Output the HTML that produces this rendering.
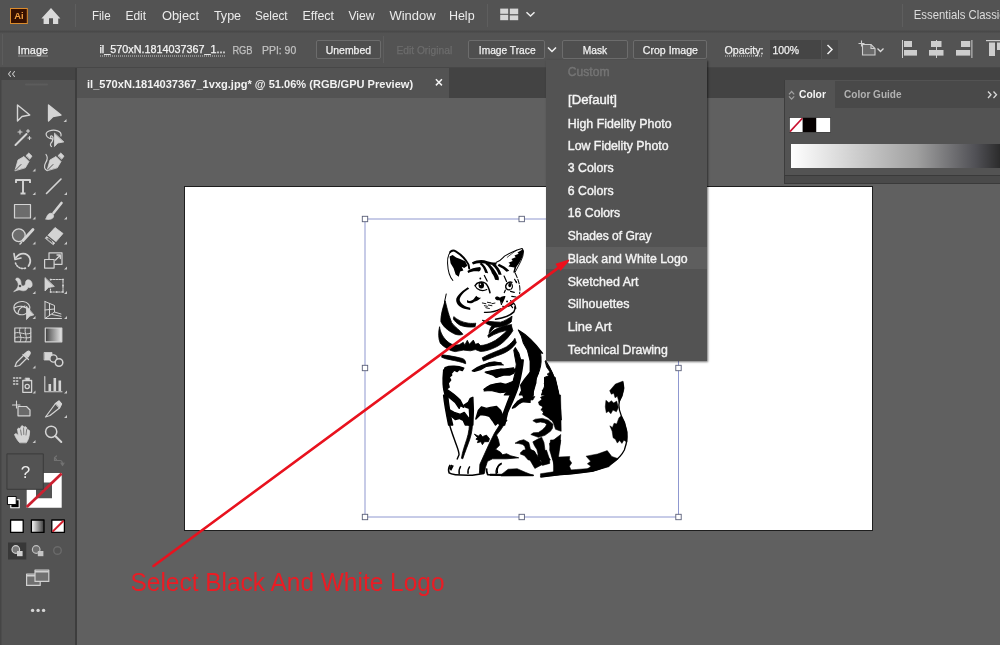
<!DOCTYPE html>
<html><head><meta charset="utf-8">
<style>
*{box-sizing:border-box;margin:0;padding:0}
html,body{width:1000px;height:645px;overflow:hidden;background:#606060;font-family:"Liberation Sans",sans-serif;}
.abs{position:absolute}
svg{will-change:transform}
#cat{filter:blur(0.3px)}
#menubar{left:0;top:0;width:1000px;height:31px;background:#535353;}
#ctrl{left:0;top:31px;width:1000px;height:36px;background:#535353;}
#sep1{left:0;top:29.5px;width:1000px;height:3px;background:linear-gradient(#515151,#494949,#505050)}
#sep2{left:0;top:66.6px;width:1000px;height:1.4px;background:#474747}
.m{position:absolute;top:7px;font-size:13.5px;color:#e8e8e8;white-space:nowrap}
.c{position:absolute;top:43px;font-size:11px;color:#e4e4e4;white-space:nowrap}
.btn{position:absolute;top:40px;height:19px;border:1px solid #6c6c6c;border-radius:2px;background:#4f4f4f}
#tabbar{left:77px;top:68px;width:923px;height:29.5px;background:#434343}
#tab{left:77px;top:68px;width:372px;height:29.5px;background:#535353}
#tabtxt{left:88px;top:76px;font-size:11.5px;font-weight:bold;color:#f0f0f0;white-space:nowrap}
#tools{left:0;top:68px;width:75px;height:577px;background:#535353}
#toolhdr{left:0;top:68px;width:75px;height:12px;background:#454545}
#toolsep{left:74.8px;top:68px;width:2.3px;height:577px;background:#3d3d3d}
#artboard{left:184px;top:186px;width:689px;height:345px;background:#fff;border:1px solid #1e1e1e}
#menu{left:545.5px;top:60px;width:161.5px;height:300.5px;background:#535353;box-shadow:0.5px 1px 2px rgba(0,0,0,.55)}
.mi{position:absolute;left:568px;font-size:12.5px;color:#f2f2f2;white-space:nowrap}
#hl{left:545.5px;top:246.5px;width:161.5px;height:22.5px;background:#5e5e5e}
#dock{left:783.5px;top:79.5px;width:217px;height:1.5px;background:#3b3b3b}
#panel{left:783.5px;top:80px;width:217px;height:95px;background:#535353;border-left:1px solid #3d3d3d;}
#ptabs{left:835px;top:81px;width:165px;height:27.3px;background:#494949}
#ptab{left:784.5px;top:81px;width:50.5px;height:27.3px;background:#535353}
#pfoot{left:784px;top:175px;width:216px;height:9px;background:#4a4a4a;border-top:1px solid #3a3a3a;border-left:1px solid #3a3a3a;border-bottom:1px solid #3a3a3a}
#grad{left:790.7px;top:143.5px;width:210px;height:24.5px;background:linear-gradient(90deg,#fff 0%,#a0a0a0 60%,#505055 88%,#2a2a2a 100%)}
</style></head><body>
<div class="abs" id="menubar"></div>
<div class="abs" id="ctrl"></div>
<div class="abs" id="sep1"></div>
<div class="abs" id="sep2"></div>

<!-- menu bar -->
<svg class="abs" style="left:0;top:0" width="80" height="32" viewBox="0 0 80 32"><rect x="10.5" y="8.5" width="16.8" height="15" fill="#361000" stroke="#dc8c2c" stroke-width="1"/><text x="18.9" y="19" font-family="Liberation Sans, sans-serif" font-size="9.4" font-weight="bold" fill="#f2a040" text-anchor="middle">Ai</text>
<path d="M51 8 L60.4 18.5 L58.2 18.5 L58.2 24 L53 24 L53 18.3 L49 18.3 L49 24 L43.6 24 L43.6 18.5 L41.4 18.5 Z" fill="#dadada"/></svg>
<div class="abs" style="left:75px;top:4px;width:1px;height:23px;background:#5e5e5e"></div>
<div class="abs" style="left:487px;top:4px;width:1px;height:23px;background:#5e5e5e"></div>
<svg class="abs" style="left:500px;top:8px" width="40" height="14" viewBox="0 0 40 14"><rect x="0.2" y="0.6" width="8" height="5.2" fill="#d6d6d6"/><rect x="9.8" y="0.6" width="8.4" height="5.6" fill="#d6d6d6"/><rect x="0.2" y="6.8" width="8" height="5.4" fill="#d6d6d6"/><rect x="9.8" y="7.4" width="8.4" height="4.8" fill="#d6d6d6"/><path d="M26.5 4.2 L30.5 8 L34.5 4.2" fill="none" stroke="#ececec" stroke-width="1.5"/></svg>
<div class="abs" style="left:902px;top:4px;width:1px;height:23px;background:#5e5e5e"></div>

<!-- control bar -->
<div class="abs" style="left:2px;top:34px;width:1px;height:31px;background:#5c5c5c"></div>
<div class="btn" style="left:315.5px;width:65.5px"></div>

<div class="btn" style="left:468px;width:77px"></div>
<svg class="abs" style="left:547px;top:46px" width="10" height="8" viewBox="0 0 10 8"><path d="M1 1.5 L5 5.5 L9 1.5" fill="none" stroke="#f0f0f0" stroke-width="1.5"/></svg>
<div class="btn" style="left:562px;width:65.5px"></div>
<div class="btn" style="left:633.3px;width:73.4px"></div>
<div class="abs" style="left:770px;top:40px;width:51px;height:19px;background:#454545"></div>
<div class="abs" style="left:822px;top:40px;width:16px;height:19px;background:#4a4a4a"></div>
<svg class="abs" style="left:826px;top:44px" width="8" height="11" viewBox="0 0 8 11"><path d="M1.5 1 L6 5.5 L1.5 10" fill="none" stroke="#f0f0f0" stroke-width="1.5"/></svg>

<!-- tab bar -->
<div class="abs" id="tabbar"></div>
<div class="abs" id="tab"></div>
<svg class="abs" style="left:434px;top:77px" width="10" height="10" viewBox="0 0 10 10"><path d="M1.9 2.3 L7.9 8.4 M7.9 2.3 L1.9 8.4" stroke="#f2f2f2" stroke-width="1.5"/></svg>

<!-- tools -->
<div class="abs" id="tools"></div>
<div class="abs" id="toolhdr"></div>
<div class="abs" id="toolsep"></div>

<!-- TOOLS-START -->
<svg class="abs" id="toolsvg" style="left:0;top:0" width="80" height="645" viewBox="0 0 80 645" fill="none" stroke="#d4d4d4" stroke-width="1.3" stroke-linejoin="round" stroke-linecap="round">
<!-- collapse chevrons -->
<path d="M10.5 71.5 L8.5 74 L10.5 76.5 M14.5 71.5 L12.5 74 L14.5 76.5" stroke="#c8c8c8" stroke-width="1.1"/>
<path d="M26 84.5 L48 84.5" stroke="#5c5c5c" stroke-width="2" stroke-dasharray="1 1"/>
<!-- row1 selection -->
<path d="M17.5 105 L17.5 121 L22 116.5 L29.8 115 Z" stroke-width="1.4"/>
<path d="M48.5 105 L48.5 121 L53 116.5 L61 115 Z" fill="#d4d4d4"/>
<!-- row2 wand, lasso -->
<path d="M15.5 145 L26.5 134" stroke-width="2"/>
<path d="M20 130 v4 M18 132 h4 M28 129.5 v3 M26.5 131 h3 M29.5 136.5 v3 M28 138 h3" stroke-width="1.1"/>
<path d="M52 139 C46 138 44 133 49 131 C55 129 62 131 61 136 M52 139 C50 138 50 135 52 136 C54 137 53 141 51 143 C50 144.5 50.5 146 51.5 146.5" stroke-width="1.2"/>
<path d="M54.5 133.5 L54.5 146.5 L57.8 143 L63.5 142 Z" fill="#d4d4d4" stroke-width="0.8"/>
<!-- row3 pen, curvature -->
<path d="M15 170.5 L18 160 L24 156.5 L29 161.5 L25.5 167.5 Z M26.2 155.5 L28.8 153 L32 156.2 L29.8 159 Z" fill="#d4d4d4" stroke-width="0.8"/>
<path d="M15.5 170 L21 164.5" stroke="#535353" stroke-width="1"/>
<path d="M47 170.5 L50 160 L56 156.5 L61 161.5 L57.5 167.5 Z M58.2 155.5 L60.8 153 L64 156.2 L61.8 159 Z" fill="#d4d4d4" stroke-width="0.8"/>
<path d="M47.5 170 L53 164.5" stroke="#535353" stroke-width="1"/>
<path d="M46 154.5 C48 157 47.5 160 45.5 163 C43.5 166.5 44.5 169.5 47 170.5" stroke-width="1.2"/>
<!-- row4 T, line -->
<path d="M16 183 L16 180 L30 180 L30 183 M23 180 L23 193 M20.5 193.5 L25.5 193.5" stroke-width="1.9" stroke-linecap="butt"/>
<path d="M46.5 193.5 L61 179" stroke-width="1.6"/>
<!-- row5 rect, brush -->
<rect x="14.5" y="204.5" width="16" height="13.5" fill="#6c6c6c" stroke-width="1.2"/>
<path d="M61.5 203 L53.5 213" stroke-width="2.6"/>
<path d="M46 219 C47 215 49 212.5 52 213.5 C54.5 215 54 218 51 219 C49 219.6 47.5 219.5 46 219 Z" fill="#d4d4d4" stroke-width="0.8"/>
<!-- row6 shaper, eraser -->
<circle cx="18.8" cy="235.3" r="6.4" fill="#6c6c6c" stroke-width="1.3"/>
<path d="M33 229.5 L23 240.5" stroke-width="2.8"/>
<path d="M21.5 242.5 L20 244" stroke-width="1.6"/>
<path d="M45.5 238 L55 227.5 L63 233.5 L53.5 244.5 Z" fill="#d4d4d4" stroke-width="0.8"/>
<path d="M47.5 236 L55.5 242.5" stroke="#535353" stroke-width="1.2"/>
<path d="M46.8 238.6 L53 243.5 L51.5 240.5 L48.5 238.3Z" fill="#535353" stroke="none"/>
<!-- row7 rotate, scale -->
<path d="M16 257.5 C20 252 27 252.5 29.5 257.5 C31 261 30 264 28.5 266" stroke-width="1.8"/>
<path d="M14 253.5 L15 259.5 L21 258" stroke-width="1.6"/>
<path d="M15.5 263 C17 267.5 22 270 27 267.5" stroke-width="1.6" stroke-dasharray="1.2 1.6"/>
<rect x="49" y="252.8" width="13" height="11.5" stroke-width="1.2"/>
<rect x="44.6" y="259.5" width="9.5" height="8.6" stroke-width="1.2" fill="#535353"/>
<path d="M55.5 260 L60 255.5 M57 255 L60.3 255 L60.3 258.5" stroke-width="1.3"/>
<!-- row8 warp, free transform -->
<path d="M14 291.5 C17 289 19 286 18 283 C17 280 15 280.5 16 278.5 C18 277 21 279 21 283 C21 286 23 287 25 285 C26 283 25 281 27 280 C30 279 33 282 32 286 C31 288 29 288 28 287 C28 290 24 292 20 290 C18 289.5 16 291 14 291.5 Z" fill="#d4d4d4" stroke-width="0.6"/>
<circle cx="20" cy="286" r="1.3" fill="#535353" stroke="none"/>
<path d="M45 278 L45 291 L48.3 287.6 L54 286.5 Z" fill="#d4d4d4" stroke-width="0.8"/>
<path d="M50.5 279.5 L63 279.5 L63 292 L50.5 292 L50.5 289" stroke-width="1.1" stroke-dasharray="1.6 1.2"/>
<path d="M49.8 278.8h1.6v1.6h-1.6z M62.2 278.8h1.6v1.6h-1.6z M62.2 291.2h1.6v1.6h-1.6z M49.8 291.2h1.6v1.6h-1.6z M56 291.2h1.6v1.6h-1.6z M62.2 285h1.6v1.6h-1.6z" fill="#d4d4d4" stroke="none"/>
<!-- row9 shape builder, perspective -->
<path d="M14 309 C13 304 18 301 23 301.5 C28 302 31 306 29.5 310 C28 314 22 316 18 314 C15.5 313 14.5 311 14 309 Z M14.5 308 C19 305 25 306 29 310 M18 314 C18 310 21 307 25 306" stroke-width="1.1"/>
<path d="M26.5 306.5 L26.5 319.5 L29.8 316 L33.5 315 Z" fill="#d4d4d4" stroke-width="0.8"/>
<path d="M45 301.5 L45 318.5 L61.5 318.5 M45 301.5 L54.5 305.5 L54.5 312 L45 318.5 M45 310 L54.5 309 M49.5 303.5 L49.5 315.5 M54.5 312 L61 314 M52 314.5 L61 316.3" stroke-width="1"/>
<!-- row10 mesh, gradient -->
<rect x="14.8" y="328" width="16" height="13.8" stroke-width="1.2"/>
<path d="M14.8 333 C20 331 25 336 30.8 333 M14.8 338 C20 335 25 340 30.8 337 M20 328 C18 333 23 337 20 341.8 M25.5 328 C23.5 333 28.5 337 25.5 341.8" stroke-width="1"/>
<!-- row11 eyedropper, blend -->
<path d="M15 366.5 L16.5 362.5 L24 355 L27 358 L19.5 365.5 Z" stroke-width="1.2"/>
<path d="M24.5 354 L27.5 351.5 C29 350.5 31 352 30 354 L28 357 Z M23 354.5 L28.5 359.5" fill="#d4d4d4" stroke-width="1.2"/>
<rect x="44.5" y="352.5" width="7.5" height="7.5" fill="#d4d4d4" stroke-width="0.8"/>
<circle cx="53.5" cy="358.5" r="3.6" fill="#535353" stroke-width="1.4"/>
<circle cx="59" cy="362.5" r="3.8" fill="#535353" stroke-width="1.5"/>
<!-- row12 sprayer, graph -->
<rect x="22.8" y="380.5" width="8.8" height="11.8" stroke-width="1.3"/>
<circle cx="27.2" cy="386.5" r="2.1" stroke-width="1.3"/>
<path d="M25.5 378 h4 v2.5 h-4 z" fill="#d4d4d4" stroke-width="0.6"/>
<path d="M13.5 378h1.3 M16.5 378h1.3 M19.5 378h1.3 M13.5 381h1.3 M16.5 381h1.3 M13.5 384h1.3 M16.5 384h1.3" stroke-width="1.3"/>
<path d="M44.8 376.5 L44.8 391.8 L62 391.8" stroke-width="1.1"/>
<path d="M48.5 384h2.6v7h-2.6z M53.5 378h2.6v13h-2.6z M58.5 380.5h2.6v10.5h-2.6z" fill="#d4d4d4" stroke="none"/>
<!-- row13 artboard, slice -->
<path d="M12.5 405 L20 405 M16.5 401 L16.5 408" stroke-width="1.1"/>
<path d="M18 406.5 L26.5 406.5 L30 410 L30 415.8 L18 415.8 Z" fill="#6a6a6a" stroke-width="1.2"/>
<path d="M45.5 417 L55.5 403.5 L59 401 L61.5 404 L59.5 408 L50 415.5 Z" stroke-width="1.2"/>
<path d="M55.5 403.5 L59 401 L61.5 404 L59.5 408 Z" fill="#d4d4d4" stroke-width="0.8"/>
<!-- row14 hand, zoom -->
<path d="M19.5 442.5 C17 440 15.5 437 14.5 434.5 C15.5 433 17 433.5 18.5 436 L17.5 429 C18.5 427.5 19.8 428 20.2 429.5 L21 426.5 C22 425.3 23.4 425.8 23.6 427.2 L24.4 427 C25.5 426.2 26.8 427 26.8 428.5 L27.5 430 C28.8 429.5 29.8 430.5 29.6 432 C29.4 436 28.5 440 26.5 442.5 Z" fill="#d4d4d4" stroke-width="0.8"/>
<path d="M20.6 430 L21.4 435 M23.6 428 L23.8 434.5 M26.6 429.5 L26 435" stroke="#535353" stroke-width="0.7"/>
<circle cx="51.2" cy="431.8" r="5.6" stroke-width="1.5"/>
<path d="M55.3 436 L61.3 442" stroke-width="2"/>
<!-- sub-tool triangles -->
<path d="M66.5 119 v3 h-3z M35.5 168.5 v3 h-3z M35.5 192 v3 h-3z M67 192 v3 h-3z M35.5 216.5 v3 h-3z M67 216.5 v3 h-3z M35.5 241.5 v3 h-3z M67 241.5 v3 h-3z M35.5 266.5 v3 h-3z M67 266.5 v3 h-3z M35.5 291 v3 h-3z M67 291 v3 h-3z M35.5 316 v3 h-3z M67 316 v3 h-3z M35.5 365.5 v3 h-3z M35.5 390.5 v3 h-3z M67 390.5 v3 h-3z M67 415 v3 h-3z M35.5 440 v3 h-3z" fill="#c8c8c8" stroke="none"/>
<!-- swap icon -->
<path d="M54.5 457.5 L54.5 460.5 L60 460.5 C62 460.5 62.5 462 62.5 464.5 M61 463 L62.5 465.5 L64 463 M56.5 456 L54.5 457.8 L56.5 459.5" stroke="#727272" stroke-width="1.2"/>
<!-- stroke box -->
<path d="M26.7 472.9 H61.7 V507.7 H26.7 Z M36 482.5 V498.3 H52 V482.5 Z" fill="#fff" fill-rule="evenodd" stroke="none"/>
<path d="M26.7 507 L61.7 473.5" stroke="#cc2030" stroke-width="2.7" stroke-linecap="butt"/>
<!-- fill box -->
<rect x="7.3" y="453.9" width="36" height="35.4" fill="#535353" stroke="#3b3b3b" stroke-width="1"/>
<!-- default colors -->
<rect x="10.8" y="499.8" width="8.4" height="8" fill="#000" stroke="#fff" stroke-width="1.1"/>
<rect x="7.8" y="496.5" width="8.4" height="8" fill="#fff" stroke="#000" stroke-width="0.9"/>
<!-- color mode -->
<defs><linearGradient id="gm" x1="0" x2="1"><stop offset="0" stop-color="#fff"/><stop offset="1" stop-color="#3a3a3a"/></linearGradient>
<linearGradient id="gt" x1="0" x2="1"><stop offset="0" stop-color="#3a3a3a"/><stop offset="0.3" stop-color="#777"/><stop offset="1" stop-color="#e8e8e8"/></linearGradient></defs>
<rect x="10.6" y="520" width="12.6" height="12.4" fill="#fff" stroke="#000" stroke-width="1.3"/>
<rect x="31.4" y="520" width="12.6" height="12.4" fill="url(#gm)" stroke="#000" stroke-width="1.3"/>
<rect x="51.8" y="520" width="12.6" height="12.4" fill="#fff" stroke="#000" stroke-width="1.3"/>
<path d="M52.6 531.6 L63.6 520.8" stroke="#d4202e" stroke-width="2" stroke-linecap="butt"/>
<rect x="45.3" y="328" width="16.5" height="13.8" fill="url(#gt)" stroke-width="1.2"/>
<!-- draw modes -->
<rect x="8" y="542.5" width="18.3" height="17" fill="#383838" stroke="none"/>
<circle cx="15.8" cy="549.5" r="3.8" fill="#7a7a7a" stroke="#d0d0d0" stroke-width="1.2"/>
<rect x="17" y="551" width="5.6" height="5.2" fill="#d0d0d0" stroke="none"/>
<circle cx="36.2" cy="549.5" r="3.8" fill="#6e6e6e" stroke="#c0c0c0" stroke-width="1.2"/>
<rect x="37.8" y="551" width="5.6" height="5.2" fill="#c4c4c4" stroke="none"/>
<circle cx="57.5" cy="550.5" r="3.8" stroke="#6a6a6a" stroke-width="1.4"/>
<!-- screen mode -->
<rect x="26.6" y="574" width="13.6" height="11.4" fill="#707070" stroke="#d0d0d0" stroke-width="1.2"/>
<rect x="35" y="570" width="13.8" height="11.4" fill="#707070" stroke="#d0d0d0" stroke-width="1.2"/>
<path d="M35 571.6h13.8 M26.6 575.6h8.4" stroke="#d0d0d0" stroke-width="1.8" stroke-linecap="butt"/>
<!-- dots -->
<circle cx="32.6" cy="610.4" r="1.7" fill="#d6d6d6" stroke="none"/><circle cx="38.1" cy="610.4" r="1.7" fill="#d6d6d6" stroke="none"/><circle cx="43.6" cy="610.4" r="1.7" fill="#d6d6d6" stroke="none"/><rect x="0" y="68" width="1.4" height="577" fill="#454545" stroke="none"/>
<text x="25.4" y="477.5" font-family="Liberation Sans, sans-serif" font-size="17" fill="#ececec" stroke="none" text-anchor="middle">?</text>
</svg>
<!-- TOOLS-END -->
<div class="abs" id="artboard"></div>


<!-- cat -->
<svg class="abs" id="cat" style="left:0;top:0" width="1000" height="645" viewBox="0 0 1000 645">
<g id="catH" transform="translate(440,244) scale(0.1008)" fill="#000" stroke="none">
<!-- HEAD-START -->
<g fill="none" stroke="#000" stroke-linecap="round" stroke-linejoin="round">
<path stroke-width="10" d="M128 362 C100 330 78 260 75 190 C73 130 88 78 128 66"/>
<path stroke-width="19" d="M100 80 C112 66 135 60 160 75 C200 100 255 150 283 205 L290 243"/>

<path stroke-width="10" d="M559 181 C600 170 620 140 640 120 C690 90 750 60 814 44"/>
<path stroke-width="9" d="M815 44 C834 60 828 100 818 132 C800 182 768 235 742 286"/>
<path stroke-width="7" d="M667 132 C700 108 730 80 757 62"/>
<path stroke-width="10" d="M748 292 C775 350 802 420 790 492" stroke-dasharray="46 18"/>
<path stroke-width="15" d="M348 412 C366 378 420 366 454 392 C472 410 486 440 496 484"/>
<path stroke-width="12" d="M350 418 C366 455 420 475 464 452"/>
<path stroke-width="14" d="M714 380 C690 370 660 384 652 414 C648 442 668 460 694 454"/>
<path stroke-width="11" d="M700 386 C724 400 724 432 706 448"/>
<path stroke-width="12" d="M440 312 L468 368 M636 318 L660 372 M740 350 L760 384 M648 458 L638 482 M700 470 L737 480 M712 520 L754 526 M700 562 L742 600 M690 592 L720 632 M745 610 L752 640 M600 560 L610 600"/>
<path stroke-width="9" d="M420 585 L455 592 M470 578 L505 584 M515 592 L545 586 M440 612 L470 618 M480 606 L515 612 M455 632 L490 640"/>
<path stroke-width="10" d="M62 495 C48 540 42 590 42 645"/>
</g>
<circle cx="400" cy="342" r="9"/><circle cx="665" cy="570" r="9"/><circle cx="755" cy="375" r="8"/>
<path d="M95 125 L125 108 L160 135 L200 150 L250 172 L272 215 L240 238 L215 226 L232 262 L200 272 L186 326 L155 302 L135 240 L105 190 Z"/>
<path d="M816.8 45 L831.8 72 L816.8 132 L786.8 186 L756.8 228 L741.8 282 L726.8 282 L738.8 234 L708.8 228 L678.8 222 L696.8 198 L678.8 186 L720.8 168 L708.8 150 L750.8 132 L738.8 114 L780.8 96 L768.8 84 L810.8 60 Z"/>
<path d="M316 184 C370 156 420 154 470 170 C500 180 530 186 564 184 L558 206 C520 213 480 203 440 194 C400 186 360 190 328 204 Z"/>
<path d="M410 184 C440 208 462 240 478 290 L448 286 C438 248 422 218 394 198 Z"/>
<path d="M466 180 C510 208 546 258 566 298 C582 320 588 342 582 360 L546 354 C541 324 526 304 516 292 C506 262 486 222 450 198 Z"/>
<path d="M535 192 C572 218 598 258 612 304 L582 306 C572 272 552 238 516 208 Z"/>
<path d="M585 196 C622 212 664 238 688 266 L660 276 C640 254 610 234 572 216 Z"/>
<path d="M272 268 C300 246 350 230 398 228 C412 244 404 266 386 273 C350 266 310 272 280 288 Z"/>
<ellipse cx="410" cy="410" rx="27" ry="32"/>
<circle cx="401" cy="399" r="7" fill="#fff"/>
<ellipse cx="692" cy="408" rx="14" ry="20"/>
<path d="M545 535 C558 512 580 518 595 534 C610 522 632 512 650 518 C644 546 628 572 616 596 C611 564 590 552 575 559 C563 559 549 550 545 535 Z"/>
<path d="M275 428 C230 458 178 498 162 540 C152 584 188 624 240 643 L300 654 L300 632 C250 622 204 598 195 556 C199 510 242 472 290 444 Z"/>
<path d="M268 556 C290 572 320 563 335 546 C345 533 350 523 360 514 C375 532 395 538 408 532 C386 558 360 563 340 573 C315 594 285 590 268 580 Z"/>
<!-- HEAD-END -->
</g>
<!-- NECK-START -->
<g id="catN" transform="translate(430,300) scale(0.1008)" fill="#000" stroke="#000" stroke-width="8" stroke-linejoin="round">
<path d="M150 8 C165 60 175 120 215 225 C245 270 300 300 326 340 C300 352 270 345 250 340 C200 315 140 280 108 215 C105 150 130 70 150 8 Z"/>
<path d="M95 265 C100 320 130 380 190 425 C220 445 250 450 290 444 L330 420 L345 448 L370 400 L390 440 L430 398 L450 440 L480 430 L500 452 C540 452 600 430 650 400 C710 360 770 300 808 256 L822 304 C784 366 724 430 664 462 C604 492 544 512 500 510 L450 492 L400 504 L330 497 L250 512 C200 505 140 470 102 428 C82 384 82 320 95 265 Z"/>
<path d="M236 165 C270 196 320 222 380 230 C410 234 440 232 454 230 L447 266 C400 273 340 267 298 250 C268 232 243 209 232 188 Z"/>
<g fill="none" stroke="#000" stroke-linecap="round">
<path stroke-width="13" d="M540 122 C600 126 660 110 702 88"/>
<path stroke-width="15" d="M650 190 C720 180 800 150 832 118 C842 100 846 84 842 70"/>
<path stroke-width="11" d="M720 62 C760 72 800 60 832 30"/>
</g>
<path d="M518 200 C560 210 620 218 700 220 C740 208 780 184 814 160 L806 218 C762 256 700 268 644 270 C624 288 604 308 586 332 C590 296 600 274 614 256 C580 246 540 230 518 200 Z"/>
<path d="M574 352 C616 300 700 258 810 244 L796 296 C722 306 652 328 580 372 Z"/>
<path d="M518 574 C600 528 700 496 760 464 C800 434 830 404 842 380 L856 424 C824 476 764 518 702 540 C642 560 582 586 530 606 Z"/>
<path d="M118 544 C170 548 250 562 320 580 C342 588 356 603 354 632 C320 616 250 602 200 592 C170 587 140 580 116 568 Z"/>
<path d="M540 645 L580 622 L640 612 L700 625 L730 645 Z"/>
</g>
<!-- NECK-END -->
<!-- BODY-START -->
<g fill="#000"><g transform="translate(430,360) scale(0.1008)" stroke="#000" stroke-width="14" stroke-linejoin="round">
 <path d="M150 75 C200 55 280 60 335 80 L320 105 L290 95 L270 115 L240 100 L215 130 L200 110 L185 150 L175 200 L165 280 L150 350 C135 300 125 200 135 120 Z"/>
 <path d="M135 100 L200 110 L215 150 L190 170 L205 200 L180 230 L190 270 L160 290 L135 280 Z"/>
 <path d="M135 270 C180 300 250 340 300 400 L335 470 L300 450 L290 480 L250 420 L200 380 L160 350 Z"/>
 <path d="M135 350 L175 350 C185 450 200 550 225 645 L185 645 C165 550 145 450 135 350 Z"/>
 <path d="M185 490 L240 520 L300 540 L340 520 L370 560 L400 600 L410 645 L350 645 L330 600 L290 580 L250 590 L215 560 Z"/>
 <path d="M335 450 L380 420 L400 380 L425 370 L430 500 L425 645 L385 645 L395 560 L390 480 L360 470 Z"/>
 <path d="M420 108 C470 70 540 40 620 28 L705 30 L640 50 L560 62 L500 95 L440 112 Z"/>
 <path d="M548 120 L620 105 L700 90 L780 100 L850 90 L830 130 L790 150 L730 150 L670 168 L640 150 L600 135 Z"/>
 <path d="M535 292 C580 250 640 235 700 230 L760 245 L860 240 L840 290 L800 335 L760 310 L720 320 L690 300 L640 300 L590 285 Z"/>
 <path d="M880 0 L925 0 C920 80 900 170 880 250 C850 350 800 450 770 520 L740 645 L690 645 C720 540 760 440 800 340 C840 230 870 110 880 0 Z"/>
 <path d="M455 585 L480 500 L510 465 L560 480 L600 470 L660 462 L700 500 L725 560 L700 600 L650 645 L620 600 L590 560 L540 545 L500 540 Z"/>
 <path d="M992 125 L940 190 L900 250 L915 330 L940 400 L880 430 L820 475 L870 410 L992 420 Z"/>
</g>
<g transform="translate(430,420) scale(0.1008)" stroke="#000" stroke-width="8" stroke-linejoin="round">
 <path fill="none" stroke="#000" stroke-width="14" d="M182 0 C195 60 215 120 245 200 C265 260 290 310 288 345 L268 392"/>
 <path d="M390 0 L420 0 C425 60 415 130 395 190 C375 250 345 320 325 385 L312 380 C320 320 345 250 365 190 C385 130 395 60 390 0 Z"/>
 <path d="M440 140 L480 160 L500 140 L520 165 L560 150 L590 185 L580 215 L540 215 L520 245 L505 215 L470 225 L480 200 L455 190 L470 175 Z"/>
 <path d="M640 0 L765 0 L700 100 L660 150 L680 200 L690 250 L650 290 L700 320 L720 345 L760 335 L800 355 L880 375 L760 385 L620 385 L570 410 L550 470 L540 530 L490 530 L495 440 L540 340 L590 230 L640 130 L690 50 Z"/>
 <path fill="none" stroke="#000" stroke-width="16" d="M200 445 C185 470 180 500 190 525 C220 548 300 550 420 548 L535 530"/>
 <path fill="none" stroke="#000" stroke-width="14" d="M305 458 C290 480 285 510 290 540 M395 460 C380 480 372 505 378 535 M230 450 L205 500 M215 445 L195 490"/>
 <path fill="none" stroke="#000" stroke-width="16" d="M562 480 C560 500 565 525 572 542 L700 548 M712 430 C680 440 660 470 668 530"/>
</g>
<g transform="translate(530,420) scale(0.1008)" stroke="#000" stroke-width="8" stroke-linejoin="round">
</g>
<g transform="translate(530,355) scale(0.1008)" stroke="#000" stroke-width="8" stroke-linejoin="round">
 <path d="M150 60 C200 130 240 200 265 300 C290 400 305 520 312 645 L205 645 L160 600 L125 560 L160 540 L95 490 L140 470 L105 420 L150 400 L120 350 L160 330 L140 280 L175 250 L190 200 L170 190 L200 170 L165 120 Z"/>
 <path d="M0 0 L75 0 L100 100 L70 140 L85 180 L55 230 L60 280 L30 330 L35 400 L0 450 Z"/>
</g>
<g transform="translate(480,330) scale(0.1008)" stroke="#000" stroke-width="10" stroke-linejoin="round">
 <path d="M380 0 C450 40 540 120 622 232 L600 225 C610 280 610 340 590 400 L560 480 L545 560 L520 645 L390 645 L430 560 L450 500 L500 420 L515 350 L490 280 L470 200 L430 130 L410 60 Z"/>
 <path d="M350 175 L385 230 L405 300 L410 380 L400 450 L370 520 L340 580 L300 645 L240 645 L290 580 L330 500 L350 420 L360 340 L345 260 L335 200 Z"/>
 <path fill="none" stroke="#000" stroke-width="10" d="M650 300 C700 380 740 450 780 645"/>
 <path d="M640 470 L690 450 L745 470 L785 645 L610 645 L640 560 Z"/>
 <path d="M60 425 C120 400 200 395 260 385 L335 375 L300 430 L240 440 L160 472 L130 450 Z"/>
 <path d="M40 605 L100 548 L180 540 L250 540 L350 500 L335 600 L200 622 L110 600 Z"/>
</g>
<g transform="translate(490,395) scale(0.1008)" stroke="#000" stroke-width="6" stroke-linejoin="round">
 <path d="M480 70 L520 40 L560 0 L700 0 L706 360 L650 340 L630 280 L600 230 L560 215 L520 190 L540 160 L505 150 L530 110 L490 100 Z"/>
 <path d="M590 480 L640 440 L702 392 L695 480 L680 560 L655 645 L625 645 L605 560 Z"/>
 <path d="M425 255 L450 240 L520 232 L580 250 L625 290 L620 330 L600 360 L545 400 L480 420 L405 392 L430 375 L480 372 L520 345 L550 315 L562 290 L540 275 L500 268 L460 275 Z"/>
 <path d="M248 478 L290 455 L335 443 L385 472 L402 540 L440 560 L470 610 L485 645 L380 645 L340 600 L300 585 L330 560 L355 548 L345 510 L325 490 L285 482 Z"/>
 <path d="M425 465 L470 440 L512 418 L535 470 L545 540 L565 600 L600 645 L470 645 L480 600 L465 540 L440 500 Z"/>
 <path d="M218 132 C240 90 270 60 305 38 L360 20 L445 15 L425 50 L380 48 L335 62 L290 90 L250 125 Z"/>
</g>
<g transform="translate(490,440) scale(0.1008)" stroke="#000" stroke-width="6" stroke-linejoin="round">
 <path d="M300 130 L330 100 L400 95 L440 110 L480 180 L525 240 L445 282 L400 205 L350 152 Z"/>
 <path d="M470 150 L560 100 L590 190 L592 232 L520 252 L500 185 Z"/>
 <path d="M600 0 L702 0 L682 150 L652 300 L622 200 L592 100 Z"/>
 <path d="M108 346 L180 290 L270 285 L350 320 L432 352 L108 357 Z"/>
 <path fill="none" stroke="#000" stroke-width="14" d="M62 340 C55 300 70 260 112 236"/>
 <path d="M0 338 L430 345 L430 356 L0 352 Z"/>
</g>
<g transform="translate(560,375) scale(0.16293)" stroke="#000" stroke-width="3" stroke-linejoin="round">
 <path fill="none" stroke="#000" stroke-width="8" d="M385 40 C395 80 385 120 365 160 C352 200 368 240 395 290 C415 350 415 410 395 460 C370 510 310 560 200 590 C120 604 60 608 0 612 L-120 626"/>
 <path d="M385 38 L394 80 L382 130 L362 168 L352 130 L338 140 L330 112 L315 118 L305 96 L340 56 Z"/>
 <path d="M282 155 L300 170 L315 158 L330 172 L348 160 L358 200 L346 226 L325 215 L312 238 L298 222 L284 232 L278 195 Z"/>
 <path d="M306 312 L322 322 L332 296 L348 300 L362 262 L376 250 L396 290 L413 350 L412 412 L392 400 L380 420 L366 402 L352 418 L340 395 L326 385 L320 345 Z"/>
 <path d="M160 498 L230 485 L290 464 L318 500 L358 514 L300 562 L190 592 L170 575 L190 560 L168 545 L188 530 Z"/>
 <path d="M-40 505 L60 500 L58 520 L72 540 L58 560 L68 585 L-40 600 Z"/>
 <path d="M-120 606 L0 588 L100 580 L200 572 L300 548 L300 562 L200 592 L100 603 L0 613 L-120 626 Z"/>
</g>
</g><!-- BODY-END -->
<g id="catA" transform="translate(430,240) scale(0.2)" fill="#000" stroke="none">
<!-- A-START -->
<!-- A-END -->
</g>
<g id="catB" transform="translate(430,369) scale(0.2)" fill="#000" stroke="none">
<!-- B-START -->
<!-- B-END -->
</g>
</svg>

<!-- SEL-START -->
<svg class="abs" id="selsvg" style="left:0;top:0" width="1000" height="645" viewBox="0 0 1000 645">
<rect x="365" y="219" width="313.5" height="298" fill="none" stroke="#8f98d0" stroke-width="1"/>
<g fill="#fff" stroke="#5a5f78" stroke-width="0.9">
<rect x="362.3" y="216.3" width="5.4" height="5.4"/><rect x="519" y="216.3" width="5.4" height="5.4"/><rect x="675.8" y="216.3" width="5.4" height="5.4"/>
<rect x="362.3" y="365.3" width="5.4" height="5.4"/><rect x="675.8" y="365.3" width="5.4" height="5.4"/>
<rect x="362.3" y="514.3" width="5.4" height="5.4"/><rect x="519" y="514.3" width="5.4" height="5.4"/><rect x="675.8" y="514.3" width="5.4" height="5.4"/>
</g>
</svg>
<!-- SEL-END -->
<!-- color panel -->
<div class="abs" id="dock"></div>
<div class="abs" id="panel"></div>
<div class="abs" id="ptabs"></div>
<div class="abs" id="ptab"></div>
<div class="abs" id="pfoot"></div>
<div class="abs" id="grad"></div>

<!-- CTRL-START -->
<svg class="abs" id="ctrlsvg" style="left:0;top:0" width="1000" height="645" viewBox="0 0 1000 645">
<!-- dotted underlines -->
<path d="M18.5 56 H47.5 M100 56 H225 M725 56 H763" stroke="#cfcfcf" stroke-width="1" stroke-dasharray="1 1" fill="none"/>
<!-- faint separators -->
<path d="M383.5 36 V63" stroke="#5d5d5d" stroke-width="1"/>
<!-- artboard icon -->
<g fill="none" stroke="#cfcfcf" stroke-width="1.1">
<path d="M858.5 43.5 H864.5 M861.5 40.5 V46.5"/>
<path d="M862.5 44.5 H871 L875 48.5 V55 H862.5 Z" fill="#6a6a6a"/>
<path d="M871 44.5 V48.5 H875"/>
<path d="M877.5 48.5 L880.5 51.5 L883.5 48.5" stroke="#dcdcdc" stroke-width="1.3"/>
</g>
<!-- align icons -->
<g fill="#cdcdcd" stroke="none">
<rect x="902" y="40" width="1" height="18"/><rect x="904" y="41" width="8" height="6"/><rect x="904" y="50" width="13" height="5.6"/>
<rect x="936" y="40" width="1" height="18"/><rect x="931" y="41" width="10.5" height="6"/><rect x="929" y="50" width="14.5" height="5.6"/>
<rect x="971.4" y="40" width="1" height="18"/><rect x="961" y="41" width="9.2" height="6"/><rect x="956" y="50" width="14.2" height="5.6"/>
<rect x="986" y="40" width="14" height="1.2"/><rect x="989" y="42.5" width="6" height="13.5"/><rect x="997" y="42.5" width="3" height="7.5"/>
</g>
<!-- panel bits -->
<path d="M789 94.3 L791.6 91.5 L794.2 94.3 M789 96.4 L791.6 99.2 L794.2 96.4" fill="none" stroke="#a0a0a0" stroke-width="1.2"/>
<path d="M988 91.5 L991 94.8 L988 98 M993.5 91.5 L996.5 94.8 L993.5 98" fill="none" stroke="#d8d8d8" stroke-width="1.3"/>
<rect x="789.6" y="117.8" width="13.2" height="14.2" fill="#fff"/>
<path d="M790 131.6 L802.4 118.2" stroke="#c8102e" stroke-width="1.6"/>
<rect x="802.7" y="117.8" width="13.6" height="14.2" fill="#050000"/>
<rect x="816.3" y="117.8" width="14.1" height="14.2" fill="#fff"/>
<rect x="789.3" y="117.5" width="41.4" height="14.8" fill="none" stroke="#3c3c3c" stroke-width="0.6"/>
</svg>
<!-- CTRL-END -->
<!-- dropdown -->
<div class="abs" id="menu"></div>
<div class="abs" id="hl"></div>
<!-- TXT-START -->
<svg class="abs" id="txt" style="left:0;top:0" width="1000" height="645" viewBox="0 0 1000 645" font-family="Liberation Sans, sans-serif">
<text x="91.9" y="19.5" font-size="12.8" fill="#ebebeb" textLength="18.7" lengthAdjust="spacingAndGlyphs">File</text>
<text x="125.4" y="19.5" font-size="12.8" fill="#ebebeb" textLength="20.7" lengthAdjust="spacingAndGlyphs">Edit</text>
<text x="161.9" y="19.5" font-size="12.8" fill="#ebebeb" textLength="37.2" lengthAdjust="spacingAndGlyphs">Object</text>
<text x="213.9" y="19.5" font-size="12.8" fill="#ebebeb" textLength="27.2" lengthAdjust="spacingAndGlyphs">Type</text>
<text x="254.9" y="19.5" font-size="12.8" fill="#ebebeb" textLength="32.7" lengthAdjust="spacingAndGlyphs">Select</text>
<text x="302.4" y="19.5" font-size="12.8" fill="#ebebeb" textLength="31.7" lengthAdjust="spacingAndGlyphs">Effect</text>
<text x="348.4" y="19.5" font-size="12.8" fill="#ebebeb" textLength="26.2" lengthAdjust="spacingAndGlyphs">View</text>
<text x="389.4" y="19.5" font-size="12.8" fill="#ebebeb" textLength="46.2" lengthAdjust="spacingAndGlyphs">Window</text>
<text x="448.9" y="19.5" font-size="12.8" fill="#ebebeb" textLength="25.7" lengthAdjust="spacingAndGlyphs">Help</text>
<text x="17.8" y="53.5" font-size="10.8" fill="#f0f0f0" stroke="#f0f0f0" stroke-width="0.25" textLength="30.2" lengthAdjust="spacingAndGlyphs">Image</text>
<text x="99.4" y="53.2" font-size="10.8" fill="#f4f4f4" stroke="#f4f4f4" stroke-width="0.25" textLength="126.2" lengthAdjust="spacingAndGlyphs">il_570xN.1814037367_1...</text>
<text x="232.4" y="53.5" font-size="10.8" fill="#c0c0c0" stroke="#c0c0c0" stroke-width="0.25" textLength="20.2" lengthAdjust="spacingAndGlyphs">RGB</text>
<text x="262.0" y="53.5" font-size="10.8" fill="#c0c0c0" stroke="#c0c0c0" stroke-width="0.25" textLength="34.2" lengthAdjust="spacingAndGlyphs">PPI: 90</text>
<text x="325.8" y="53.5" font-size="10.8" fill="#f2f2f2" stroke="#f2f2f2" stroke-width="0.25" textLength="45.2" lengthAdjust="spacingAndGlyphs">Unembed</text>
<text x="396.4" y="53.5" font-size="10.8" fill="#6c6c6c" stroke="#6c6c6c" stroke-width="0.25" textLength="55.8" lengthAdjust="spacingAndGlyphs">Edit Original</text>
<text x="478.8" y="53.5" font-size="10.8" fill="#f2f2f2" stroke="#f2f2f2" stroke-width="0.25" textLength="56.8" lengthAdjust="spacingAndGlyphs">Image Trace</text>
<text x="582.8" y="53.5" font-size="10.8" fill="#f2f2f2" stroke="#f2f2f2" stroke-width="0.25" textLength="24.4" lengthAdjust="spacingAndGlyphs">Mask</text>
<text x="642.8" y="53.5" font-size="10.8" fill="#f2f2f2" stroke="#f2f2f2" stroke-width="0.25" textLength="55.2" lengthAdjust="spacingAndGlyphs">Crop Image</text>
<text x="724.4" y="53.5" font-size="10.8" fill="#f0f0f0" stroke="#f0f0f0" stroke-width="0.25" textLength="39.2" lengthAdjust="spacingAndGlyphs">Opacity:</text>
<text x="772.4" y="53.5" font-size="10.8" fill="#f0f0f0" stroke="#f0f0f0" stroke-width="0.25" textLength="26.7" lengthAdjust="spacingAndGlyphs">100%</text>
<text x="87.0" y="88" font-size="11" font-weight="bold" fill="#f2f2f2" textLength="326.1" lengthAdjust="spacingAndGlyphs">il_570xN.1814037367_1vxg.jpg* @ 51.06% (RGB/GPU Preview)</text>
<text x="567.8" y="76.4" font-size="13" fill="#757575" stroke="#757575" stroke-width="0.4" textLength="41.8" lengthAdjust="spacingAndGlyphs">Custom</text>
<text x="568.0" y="104.4" font-size="13" fill="#f4f4f4" stroke="#f4f4f4" stroke-width="0.4" textLength="49.0" lengthAdjust="spacingAndGlyphs">[Default]</text>
<text x="567.8" y="127.6" font-size="13" fill="#f4f4f4" stroke="#f4f4f4" stroke-width="0.4" textLength="103.8" lengthAdjust="spacingAndGlyphs">High Fidelity Photo</text>
<text x="567.8" y="150" font-size="13" fill="#f4f4f4" stroke="#f4f4f4" stroke-width="0.4" textLength="100.8" lengthAdjust="spacingAndGlyphs">Low Fidelity Photo</text>
<text x="567.8" y="172" font-size="13" fill="#f4f4f4" stroke="#f4f4f4" stroke-width="0.4" textLength="45.8" lengthAdjust="spacingAndGlyphs">3 Colors</text>
<text x="567.8" y="194.6" font-size="13" fill="#f4f4f4" stroke="#f4f4f4" stroke-width="0.4" textLength="45.8" lengthAdjust="spacingAndGlyphs">6 Colors</text>
<text x="567.8" y="217.4" font-size="13" fill="#f4f4f4" stroke="#f4f4f4" stroke-width="0.4" textLength="52.4" lengthAdjust="spacingAndGlyphs">16 Colors</text>
<text x="567.8" y="240" font-size="13" fill="#f4f4f4" stroke="#f4f4f4" stroke-width="0.4" textLength="83.8" lengthAdjust="spacingAndGlyphs">Shades of Gray</text>
<text x="567.8" y="263" font-size="13" fill="#f4f4f4" stroke="#f4f4f4" stroke-width="0.4" textLength="119.8" lengthAdjust="spacingAndGlyphs">Black and White Logo</text>
<text x="567.8" y="285.6" font-size="13" fill="#f4f4f4" stroke="#f4f4f4" stroke-width="0.4" textLength="70.8" lengthAdjust="spacingAndGlyphs">Sketched Art</text>
<text x="567.8" y="308.4" font-size="13" fill="#f4f4f4" stroke="#f4f4f4" stroke-width="0.4" textLength="61.6" lengthAdjust="spacingAndGlyphs">Silhouettes</text>
<text x="567.8" y="331" font-size="13" fill="#f4f4f4" stroke="#f4f4f4" stroke-width="0.4" textLength="43.8" lengthAdjust="spacingAndGlyphs">Line Art</text>
<text x="567.8" y="354" font-size="13" fill="#f4f4f4" stroke="#f4f4f4" stroke-width="0.4" textLength="100.0" lengthAdjust="spacingAndGlyphs">Technical Drawing</text>
<text x="799.0" y="98.4" font-size="11" font-weight="bold" fill="#f4f4f4" textLength="26.9" lengthAdjust="spacingAndGlyphs">Color</text>
<text x="844.1" y="98.4" font-size="11" font-weight="bold" fill="#b2b2b2" textLength="57.5" lengthAdjust="spacingAndGlyphs">Color Guide</text>
<text x="913.8" y="19.2" font-size="12.8" fill="#dcdcdc" textLength="91.2" lengthAdjust="spacingAndGlyphs">Essentials Classic</text>
</svg>
<!-- TXT-END -->
<!-- ARROW-START -->
<svg class="abs" id="arrowsvg" style="left:0;top:0" width="1000" height="645" viewBox="0 0 1000 645">
<path d="M153.5 566 L560 266.6" stroke="#e8121e" stroke-width="2.6" stroke-linecap="round" fill="none"/>
<path d="M568.4 260.4 L556.6 264.2 L560.6 269.8 Z" fill="#ee101c" stroke="#ee101c" stroke-width="1.6" stroke-linejoin="round"/>
<text x="130.5" y="591" font-family="Liberation Sans, sans-serif" font-size="25" fill="#ea1c24" textLength="314" lengthAdjust="spacingAndGlyphs">Select Black And White Logo</text>
</svg>
<!-- ARROW-END -->
</body></html>
